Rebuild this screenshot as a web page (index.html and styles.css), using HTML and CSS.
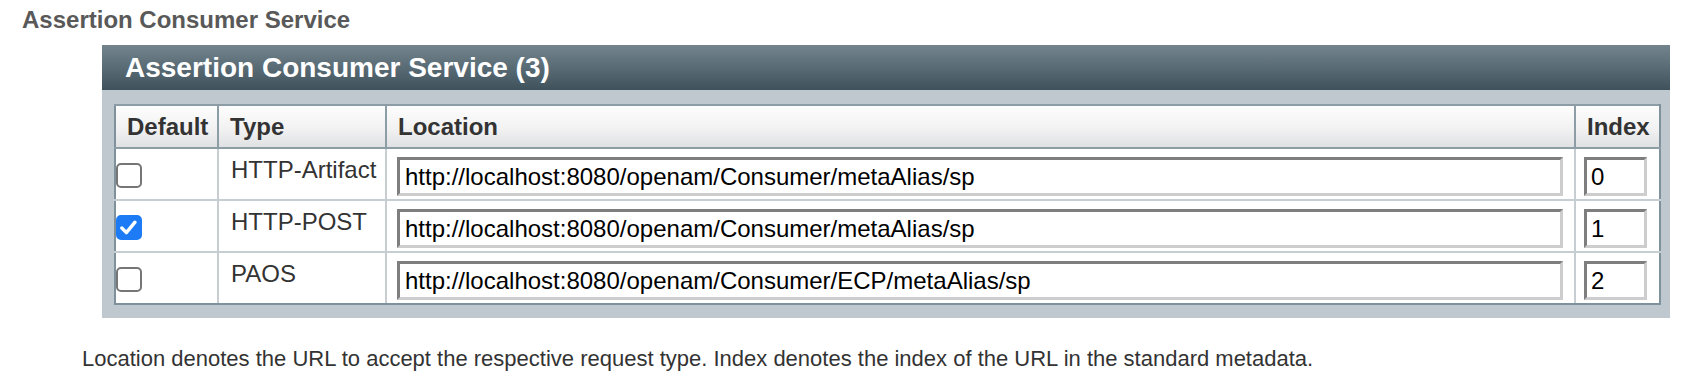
FILE: index.html
```html
<!DOCTYPE html>
<html lang="en">
<head>
<meta charset="utf-8">
<title>Assertion Consumer Service</title>
<link rel="stylesheet" href="styles.css">
</head>
<body>
<div class="page">
  <h2 class="section-title">Assertion Consumer Service</h2>
  <div class="panel">
    <div class="panel-head">Assertion Consumer Service (3)</div>
    <div class="panel-body">
      <table class="grid">
        <colgroup>
          <col class="c-default">
          <col class="c-type">
          <col class="c-loc">
          <col class="c-idx">
        </colgroup>
        <thead>
          <tr>
            <th>Default</th>
            <th>Type</th>
            <th>Location</th>
            <th>Index</th>
          </tr>
        </thead>
        <tbody>
          <tr>
            <td class="cb-cell"><span class="cb"></span></td>
            <td class="type">HTTP-Artifact</td>
            <td class="loc"><input class="field field-loc" type="text" value="http://localhost:8080/openam/Consumer/metaAlias/sp"></td>
            <td class="idx"><input class="field field-idx" type="text" value="0"></td>
          </tr>
          <tr>
            <td class="cb-cell"><span class="cb cb-on"><svg viewBox="0 0 25 25" width="25" height="25"><path d="M5.8 13 L10.4 17.6 L19 7.2" fill="none" stroke="#fff" stroke-width="3.4" stroke-linecap="round" stroke-linejoin="round"/></svg></span></td>
            <td class="type">HTTP-POST</td>
            <td class="loc"><input class="field field-loc" type="text" value="http://localhost:8080/openam/Consumer/metaAlias/sp"></td>
            <td class="idx"><input class="field field-idx" type="text" value="1"></td>
          </tr>
          <tr>
            <td class="cb-cell"><span class="cb"></span></td>
            <td class="type">PAOS</td>
            <td class="loc"><input class="field field-loc" type="text" value="http://localhost:8080/openam/Consumer/ECP/metaAlias/sp"></td>
            <td class="idx"><input class="field field-idx" type="text" value="2"></td>
          </tr>
        </tbody>
      </table>
    </div>
  </div>
  <p class="note">Location denotes the URL to accept the respective request type. Index denotes the index of the URL in the standard metadata.</p>
</div>
</body>
</html>
```
FILE: styles.css
```css
html, body {
  margin: 0;
  padding: 0;
  background: #ffffff;
}
body {
  font-family: "Liberation Sans", Arial, sans-serif;
  color: #333333;
}
.page {
  padding: 6px 0 0 22px;
}
.section-title {
  margin: 0;
  font-size: 24px;
  line-height: 28px;
  font-weight: bold;
  color: #595959;
}
.panel {
  margin: 11px 0 0 80px;
  width: 1568px;
  background: #bfc8ce;
}
.panel-head {
  height: 45px;
  line-height: 45px;
  padding-left: 23px;
  font-size: 28px;
  font-weight: bold;
  color: #ffffff;
  background: linear-gradient(#73848d, #3f525b);
}
.panel-body {
  padding: 14px 11px 13px 12px;
}
.grid {
  width: 1545px;
  table-layout: fixed;
  border-collapse: collapse;
  background: #ffffff;
  border: 2px solid #7f929b;
}
.c-default { width: 103px; }
.c-type { width: 168px; }
.c-loc { width: 1189px; }
.c-idx { width: 85px; }
.grid th {
  height: 41px;
  padding: 0 0 0 11px;
  text-align: left;
  font-size: 24px;
  font-weight: bold;
  color: #333333;
  background: linear-gradient(#fdfdfd, #f2f2f3 55%, #e0e1e3);
  border: 2px solid #8d9da5;
}
.grid td {
  height: 50px;
  padding: 0;
  vertical-align: top;
  border: 2px solid #c6ced2;
  font-size: 24px;
}
.grid tbody tr:last-child td {
  border-bottom-color: #7f929b;
}
.grid td:first-child, .grid th:first-child { border-left-color: #7f929b; }
.grid td:last-child, .grid th:last-child { border-right-color: #7f929b; }
.cb {
  display: block;
  box-sizing: border-box;
  width: 26px;
  height: 25px;
  margin: 14px 0 0 0;
  border: 2px solid #767676;
  border-radius: 5px;
  background: #ffffff;
}
.cb-on {
  border-color: #1c7bf5;
  background: #1c7bf5;
}
.cb-on svg {
  display: block;
  margin: -2px 0 0 -2px;
}
.grid td.type {
  height: 43px;
  padding: 7px 0 0 12px;
  line-height: 28px;
  color: #333333;
}
.grid td.loc {
  height: 42px;
  padding: 8px 0 0 10px;
}
.grid td.idx {
  height: 42px;
  padding: 8px 0 0 8px;
}
.field {
  display: block;
  box-sizing: border-box;
  height: 39px;
  margin: 0;
  padding: 0 5px;
  font-family: "Liberation Sans", Arial, sans-serif;
  font-size: 24px;
  color: #000000;
  background: #ffffff;
  border-style: solid;
  border-width: 3px;
  border-color: #7e7e7e #cdcdcd #cdcdcd #7e7e7e;
  outline: none;
}
.field-loc { width: 1166px; }
.field-idx { width: 63px; padding: 0 4px; }
.note {
  margin: 28px 0 0 60px;
  font-size: 22px;
  line-height: 26px;
  color: #333333;
}
```
